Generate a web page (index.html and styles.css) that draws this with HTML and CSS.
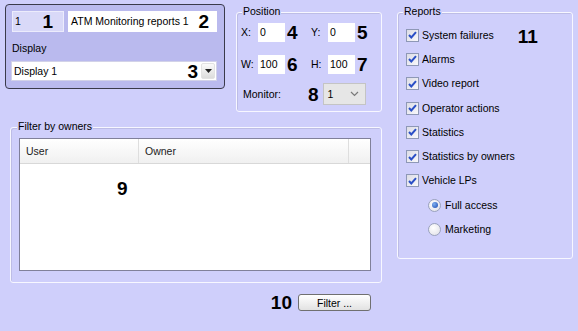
FILE: index.html
```html
<!DOCTYPE html>
<html lang="en">
<head>
  <meta charset="UTF-8" />
  <title>ATM Monitoring reports — settings</title>
  <link rel="stylesheet" href="styles.css">
</head>
<body>
  <div class="window">
    <div class="left">
      <div class="top-row">
        <div class="panel">
          <div class="name-row">
            <div class="field field-id"><span>1</span><b class="tag">1</b></div>
            <div class="field field-name"><span>ATM Monitoring reports 1</span><b class="tag">2</b></div>
          </div>
          <div class="caption">Display</div>
          <div class="combo">
            <span>Display 1</span>
            <b class="tag">3</b>
            <span class="drop-btn">
              <svg width="7" height="4" viewBox="0 0 7 4"><path d="M0 0h7L3.5 4z" fill="#222"/></svg>
            </span>
          </div>
        </div>

        <div class="group position">
          <span class="legend">Position</span>
          <div class="coord-row">
            <div class="coord"><span class="coord-label">X:</span><div class="input">0</div><b class="tag">4</b></div>
            <div class="coord"><span class="coord-label">Y:</span><div class="input">0</div><b class="tag">5</b></div>
          </div>
          <div class="coord-row second">
            <div class="coord"><span class="coord-label">W:</span><div class="input">100</div><b class="tag">6</b></div>
            <div class="coord"><span class="coord-label">H:</span><div class="input">100</div><b class="tag">7</b></div>
          </div>
          <div class="monitor-row">
            <span class="monitor-label">Monitor:</span>
            <b class="tag">8</b>
            <div class="select">
              <span>1</span>
              <svg width="9" height="6" viewBox="0 0 9 6"><path d="M1 1l3.5 3.5L8 1" fill="none" stroke="#7a7a7a" stroke-width="1.2"/></svg>
            </div>
          </div>
        </div>
      </div>

      <div class="group owners">
        <span class="legend">Filter by owners</span>
        <div class="list">
          <div class="list-head">
            <div class="col col-user">User</div>
            <div class="col col-owner">Owner</div>
            <div class="col col-rest"></div>
          </div>
          <div class="list-body"><b class="tag">9</b></div>
        </div>
      </div>

      <div class="actions">
        <b class="tag">10</b>
        <button class="btn">Filter ...</button>
      </div>
    </div>

    <div class="group reports">
      <span class="legend">Reports</span>
      <div class="opt"><span class="chk"><svg width="9" height="8" viewBox="0 0 9 8"><path d="M1 4l2.3 2.5L8 1.2" fill="none" stroke="#2a4fc6" stroke-width="2"/></svg></span>System failures<b class="tag tag-reports">11</b></div>
      <div class="opt"><span class="chk"><svg width="9" height="8" viewBox="0 0 9 8"><path d="M1 4l2.3 2.5L8 1.2" fill="none" stroke="#2a4fc6" stroke-width="2"/></svg></span>Alarms</div>
      <div class="opt"><span class="chk"><svg width="9" height="8" viewBox="0 0 9 8"><path d="M1 4l2.3 2.5L8 1.2" fill="none" stroke="#2a4fc6" stroke-width="2"/></svg></span>Video report</div>
      <div class="opt"><span class="chk"><svg width="9" height="8" viewBox="0 0 9 8"><path d="M1 4l2.3 2.5L8 1.2" fill="none" stroke="#2a4fc6" stroke-width="2"/></svg></span>Operator actions</div>
      <div class="opt"><span class="chk"><svg width="9" height="8" viewBox="0 0 9 8"><path d="M1 4l2.3 2.5L8 1.2" fill="none" stroke="#2a4fc6" stroke-width="2"/></svg></span>Statistics</div>
      <div class="opt"><span class="chk"><svg width="9" height="8" viewBox="0 0 9 8"><path d="M1 4l2.3 2.5L8 1.2" fill="none" stroke="#2a4fc6" stroke-width="2"/></svg></span>Statistics by owners</div>
      <div class="opt"><span class="chk"><svg width="9" height="8" viewBox="0 0 9 8"><path d="M1 4l2.3 2.5L8 1.2" fill="none" stroke="#2a4fc6" stroke-width="2"/></svg></span>Vehicle LPs</div>
      <div class="opt sub"><span class="radio checked"></span>Full access</div>
      <div class="opt sub"><span class="radio"></span>Marketing</div>
    </div>
  </div>
</body>
</html>
```

FILE: styles.css
```css
* {
  box-sizing: border-box;
}

body {
  margin: 0;
  background: #cfcffb;
  font-family: "Liberation Sans", Arial, sans-serif;
  font-size: 10.5px;
  line-height: 13px;
  color: #000;
}

.window {
  display: flex;
  align-items: flex-start;
  padding: 4px 0 0 5px;
  width: 578px;
  height: 331px;
}

.left {
  width: 377px;
}

.top-row {
  display: flex;
  align-items: flex-start;
}

.tag {
  font-size: 19px;
  line-height: 1;
  font-weight: bold;
  color: #000;
}

/* name / display panel */
.panel {
  width: 220px;
  height: 85px;
  border: 1px solid #3a3a4a;
  border-radius: 4px;
  background: #babaee;
  padding: 6px 6px 0 6px;
}

.name-row {
  display: flex;
  gap: 4px;
}

.field {
  height: 21px;
  display: flex;
  align-items: center;
  justify-content: space-between;
}

.field-id {
  width: 52px;
  background: #d9d9f8;
  border: 1px solid #ececfc;
  padding: 0 10px 0 2px;
}

.field-name {
  width: 149px;
  background: #fff;
  padding: 0 8px 0 3px;
}

.caption {
  margin-top: 10px;
}

.combo {
  margin-top: 6px;
  margin-left: -1px;
  width: 206px;
  height: 20px;
  background: #fff;
  border: 1px solid #d2d2e8;
  display: flex;
  align-items: center;
  padding-left: 2px;
}

.combo .tag {
  margin-left: auto;
  margin-right: 3px;
}

.drop-btn {
  width: 14px;
  height: 16px;
  margin-right: 1px;
  border: 1px solid #e2e2e2;
  border-radius: 2px;
  background: linear-gradient(#fafafa, #dcdcdc);
  display: flex;
  align-items: center;
  justify-content: center;
}

/* group boxes */
.group {
  position: relative;
  border: 1px solid #f7f7ff;
  border-radius: 3px;
  box-shadow: 1px 1px 0 #bdbde6 inset;
}

.legend {
  position: absolute;
  top: -8px;
  left: 5px;
  padding: 0 1px;
  background: #cfcffb;
}

.position {
  margin-left: 11px;
  margin-top: 8px;
  width: 146px;
  height: 100px;
  padding: 10px 0 0 4px;
}

.coord-row {
  display: flex;
}

.coord-row.second {
  margin-top: 13px;
}

.coord {
  display: flex;
  align-items: center;
  width: 72px;
}

.coord-label {
  width: 17px;
}

.input {
  width: 27px;
  height: 19px;
  background: #fff;
  padding-left: 2px;
  display: flex;
  align-items: center;
}

.coord .tag {
  margin-left: 2px;
}

.monitor-row {
  display: flex;
  align-items: center;
  margin-top: 9px;
  padding-left: 2px;
}

.monitor-label {
  width: 65px;
}

.select {
  margin-left: 4px;
  width: 43px;
  height: 22px;
  border: 1px solid #c4c4c4;
  background: #e6e6e6;
  display: flex;
  align-items: center;
  justify-content: space-between;
  padding: 0 6px 0 4px;
}

/* owners list */
.owners {
  margin-top: 15px;
  margin-left: 5px;
  width: 372px;
  height: 156px;
  padding: 10px 0 0 8px;
}

.owners .legend {
  left: 6px;
}

.list {
  width: 352px;
  height: 133px;
  border: 1px solid #80809a;
  background: #fff;
}

.list-head {
  display: flex;
  height: 25px;
  border-bottom: 1px solid #d8d8d8;
  background: linear-gradient(#ffffff, #f0f0f0);
}

.col {
  display: flex;
  align-items: center;
  padding-left: 6px;
  color: #222;
  border-right: 1px solid #dedede;
}

.col-user {
  width: 119px;
}

.col-owner {
  width: 210px;
}

.col-rest {
  flex: 1;
  border-right: none;
}

.list-body {
  padding: 15px 0 0 97px;
}

.actions {
  display: flex;
  justify-content: flex-end;
  align-items: center;
  margin-top: 10px;
  padding-right: 11px;
}

.actions .tag {
  margin-right: 6px;
}

.btn {
  width: 73px;
  height: 17px;
  padding: 0;
  font-family: inherit;
  font-size: 10.5px;
  color: #000;
  border: 1px solid #707070;
  border-radius: 3px;
  background: linear-gradient(#ffffff, #e2e2e2);
}

/* reports */
.reports {
  margin-left: 15px;
  margin-top: 8px;
  width: 176px;
  height: 247px;
  padding: 10px 0 0 8px;
}

.opt {
  display: flex;
  align-items: center;
  height: 24.3px;
}

.chk {
  width: 13px;
  height: 13px;
  margin-right: 3px;
  border: 1px solid #8e98b6;
  background: linear-gradient(135deg, #dcdce6, #f8f8fb);
  display: flex;
  align-items: center;
  justify-content: center;
}

.tag-reports {
  margin-left: 24px;
  margin-top: 3px;
}

.opt.sub {
  padding-left: 22px;
}

.radio {
  position: relative;
  width: 13px;
  height: 13px;
  margin-right: 4px;
  border: 1px solid #9aa2bc;
  border-radius: 50%;
  background: radial-gradient(circle at 40% 35%, #ffffff, #dedee6);
}

.radio.checked::after {
  content: "";
  position: absolute;
  left: 2.5px;
  top: 2.5px;
  width: 6px;
  height: 6px;
  border-radius: 50%;
  background: radial-gradient(circle at 35% 35%, #7fb0f0, #1a48b0);
}
```
